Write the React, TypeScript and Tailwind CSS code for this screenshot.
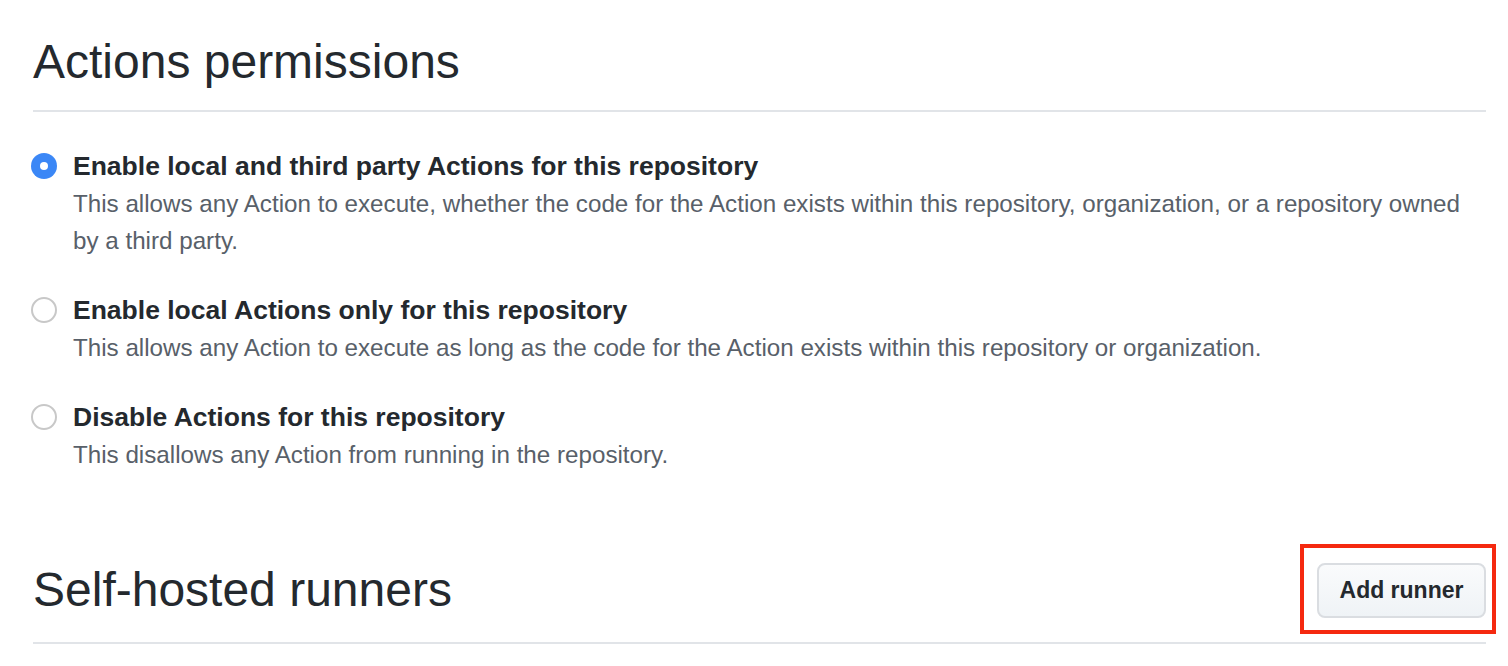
import React, { useState } from "react";

const options = [
  {
    id: "all",
    title: "Enable local and third party Actions for this repository",
    description:
      "This allows any Action to execute, whether the code for the Action exists within this repository, organization, or a repository owned by a third party.",
  },
  {
    id: "local",
    title: "Enable local Actions only for this repository",
    description:
      "This allows any Action to execute as long as the code for the Action exists within this repository or organization.",
  },
  {
    id: "none",
    title: "Disable Actions for this repository",
    description: "This disallows any Action from running in the repository.",
  },
];

const Radio = ({ checked }: { checked: boolean }) =>
  checked ? (
    <span className="flex h-[26px] w-[26px] shrink-0 items-center justify-center rounded-full bg-[#3b87f6]">
      <span className="block h-[8px] w-[8px] rounded-full bg-white" />
    </span>
  ) : (
    <span className="block h-[26px] w-[26px] shrink-0 rounded-full border-2 border-[#c8c8c8] bg-white" />
  );

export default function App() {
  const [selected, setSelected] = useState("all");

  return (
    <div className="min-h-screen bg-white pl-[33px] pr-[22px] pt-[32px] font-['Liberation_Sans',Arial,sans-serif] text-[#24292e]">
      <h2 className="border-b-2 border-[#e1e4e8] pb-[18px] text-[48px] font-normal leading-[60px]">
        Actions permissions
      </h2>

      <div className="mt-[36px] flex flex-col gap-[33px]">
        {options.map((opt) => (
          <label
            key={opt.id}
            className="flex cursor-pointer items-start"
            onClick={() => setSelected(opt.id)}
          >
            <span className="-ml-[2px] mt-[5px] block w-[42px] shrink-0">
              <Radio checked={selected === opt.id} />
            </span>
            <div>
              <div className="text-[26.5px] font-bold leading-[36px]">
                {opt.title}
              </div>
              <p className="mt-[1px] text-[24.2px] leading-[37px] text-[#586069]">
                {opt.description}
              </p>
            </div>
          </label>
        ))}
      </div>

      <div className="mt-[87px] flex items-center justify-between border-b-2 border-[#e1e4e8] pb-[22px]">
        <h2 className="text-[48px] font-normal leading-[60px]">
          Self-hosted runners
        </h2>
        <div className="relative">
          <span className="pointer-events-none absolute -bottom-[16px] -left-[17px] -right-[10px] -top-[19px] border-4 border-[#f5290f]" />
          <button className="h-[55px] w-[169px] rounded-[8px] border-2 border-[#dadde1] bg-gradient-to-b from-[#fafbfc] to-[#eff3f6] text-[23px] font-bold text-[#24292e]">
            Add runner
          </button>
        </div>
      </div>
    </div>
  );
}
